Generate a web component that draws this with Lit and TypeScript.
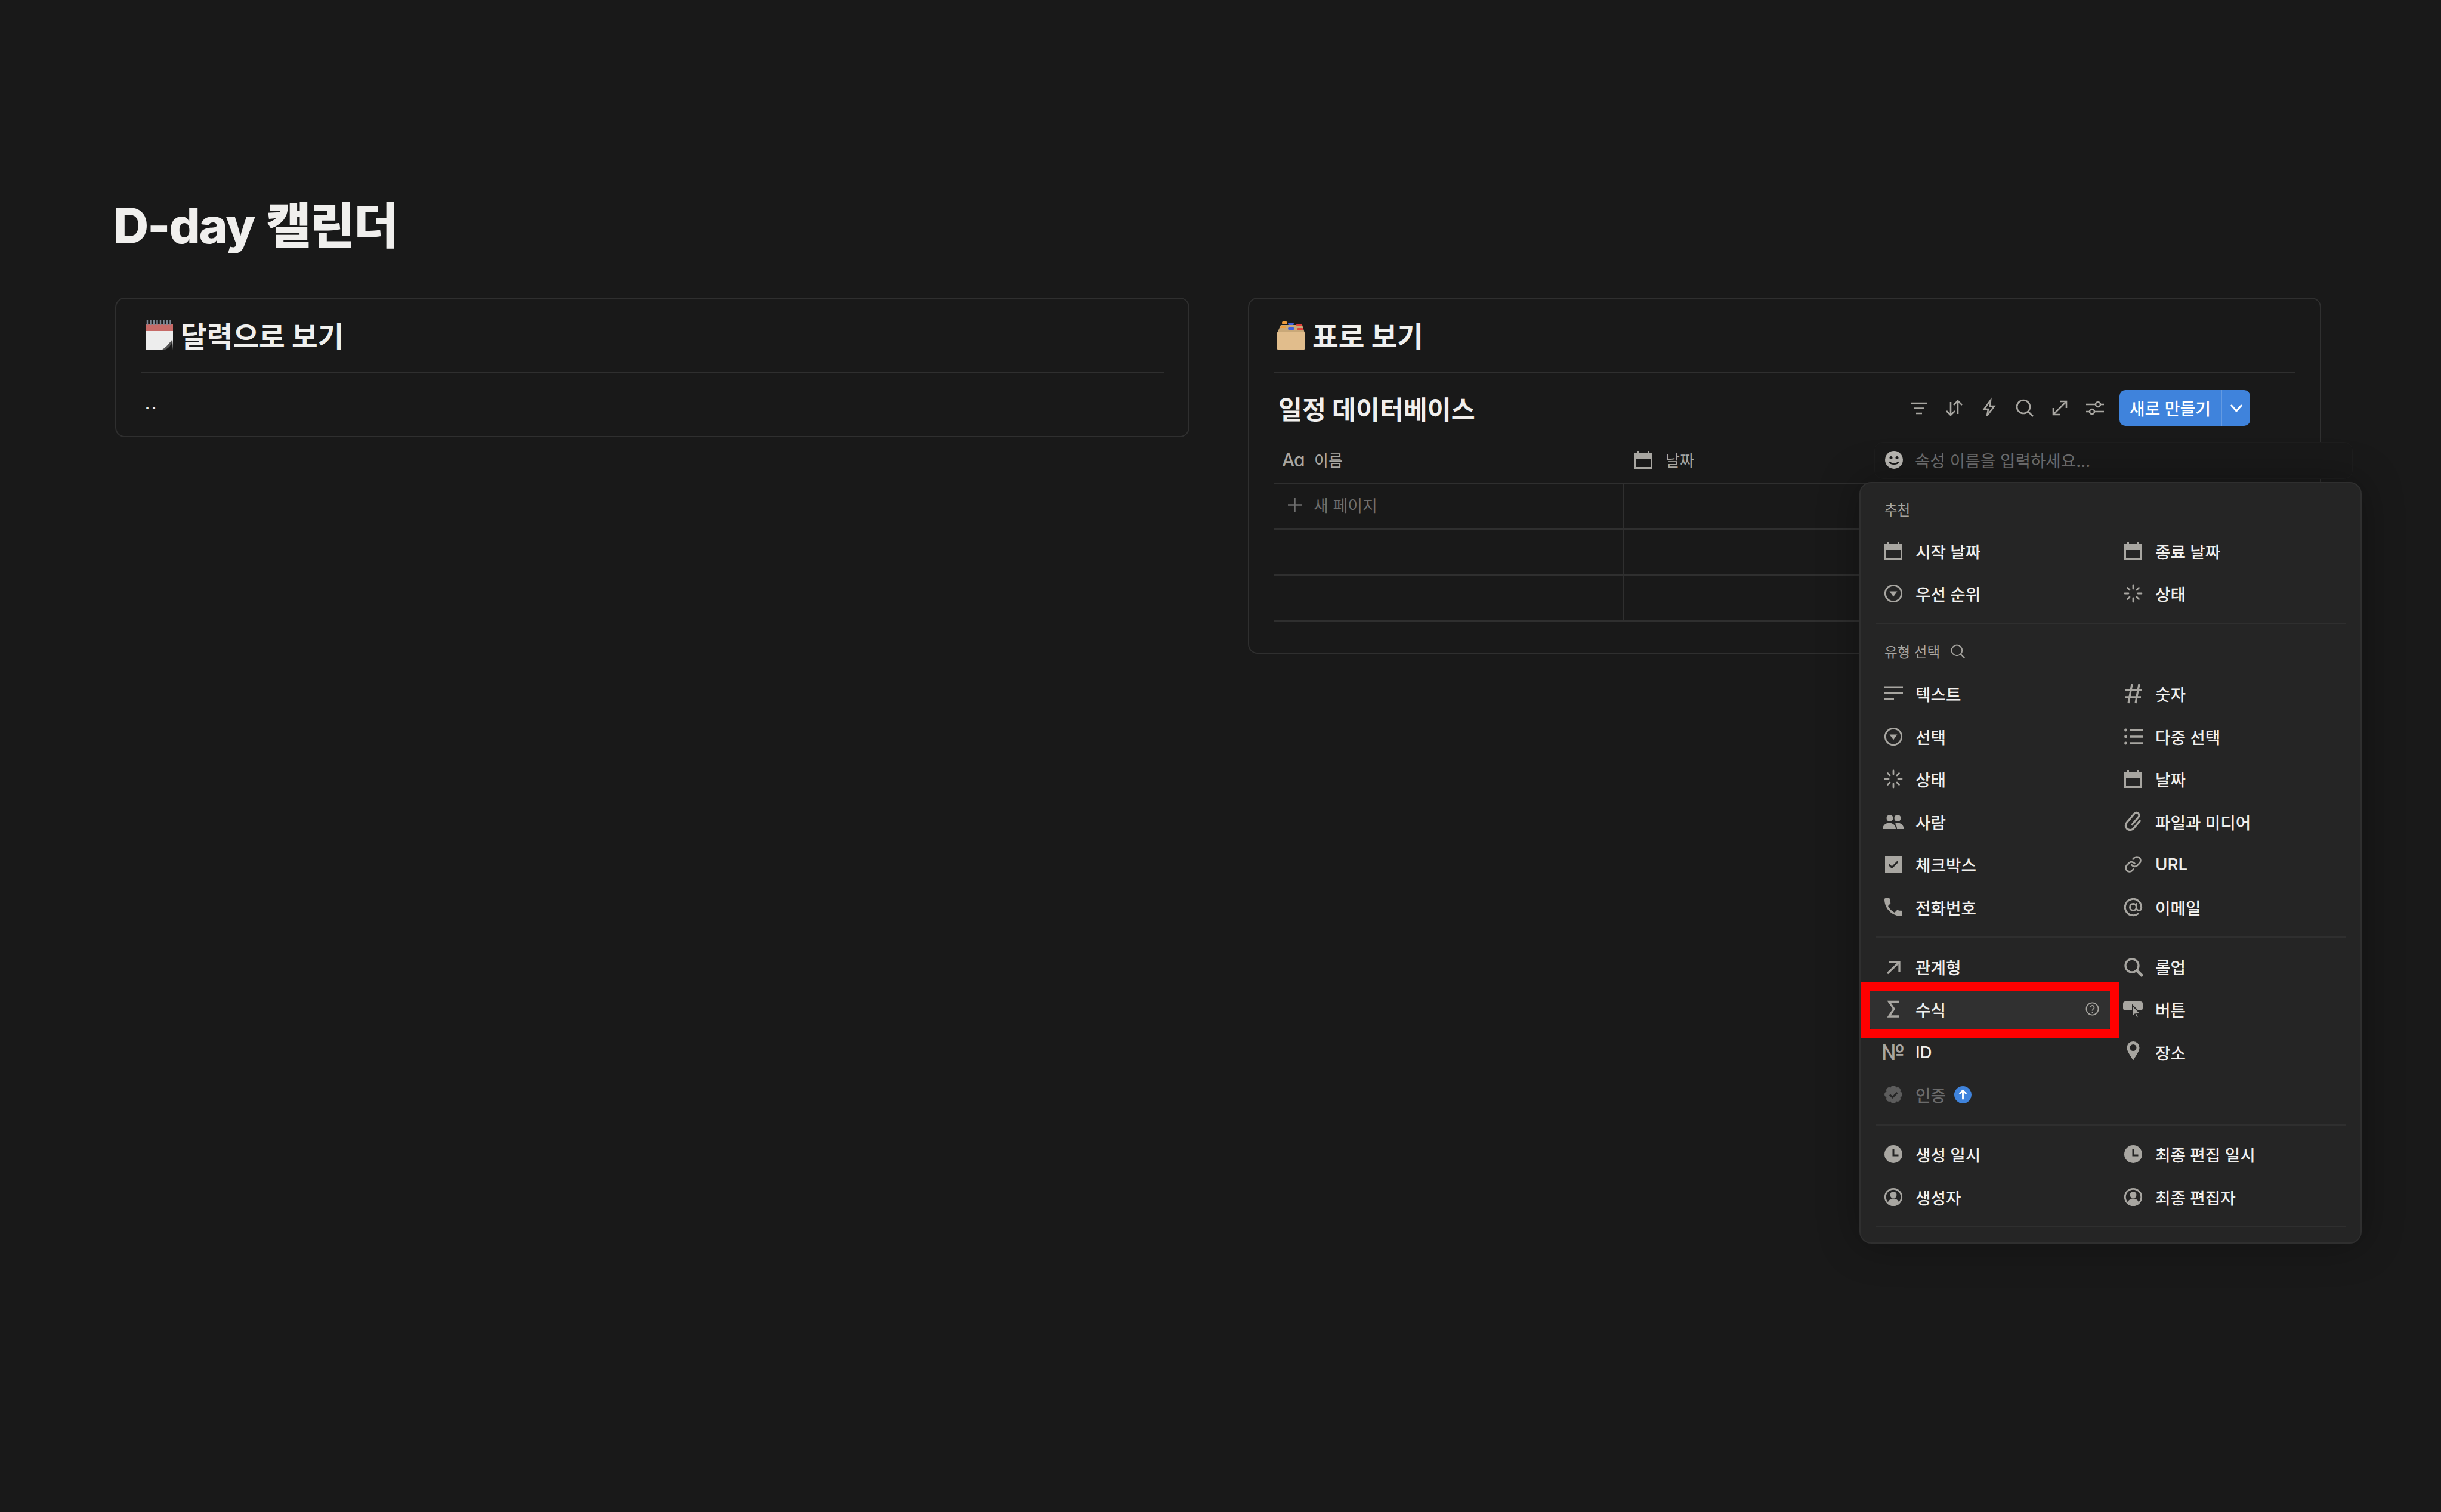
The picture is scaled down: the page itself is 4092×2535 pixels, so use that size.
import { LitElement, html, css } from "lit";
import { customElement } from "lit/decorators.js";

type Item = { icon: string; label: string; help?: boolean; hover?: boolean; dim?: boolean; upgrade?: boolean };

const icons: Record<string, () => unknown> = {
  calendar: () => html`<svg viewBox="0 0 30 30"><path class="f" fill-rule="evenodd" d="M0 3h5V0h3v3h14V0h3v3h5v27H0zM3 13v14h24V13z"/></svg>`,
  select: () => html`<svg viewBox="0 0 30 30"><circle class="s" cx="15" cy="15" r="13.700"/><path class="f" d="M8.500 11.500h13l-6.500 9z"/></svg>`,
  status: () => html`<svg viewBox="0 0 30 30"><path class="s round" d="M15 1v6M15 23v6M1 15h6M23 15h6M5.500 5.500l3.500 3.500M21 21l3.500 3.500M24.500 5.500L21 9M9 21l-3.500 3.500"/></svg>`,
  text: () => html`<svg viewBox="0 0 30 30"><path class="s" d="M0 4h31M0 14h31M0 24h16"/></svg>`,
  hash: () => html`<svg viewBox="0 0 30 30"><path class="s hv" d="M13 -1L7 31M25 -1L19 31M2 9h27M1 21h27"/></svg>`,
  multi: () => html`<svg viewBox="0 0 30 30"><path class="s hv" d="M9 4h22M9 15h22M9 26h22"/><circle class="f" cx="2.500" cy="4" r="2.400"/><circle class="f" cx="2.500" cy="15" r="2.400"/><circle class="f" cx="2.500" cy="26" r="2.400"/></svg>`,
  people: () => html`<svg viewBox="0 0 30 30"><circle class="f" cx="9" cy="8.500" r="5.500"/><circle class="f" cx="22" cy="8.500" r="5.500"/><path class="f" d="M-3 27c0-6 5-10.500 11-10.500s11 4.500 11 10.500z"/><path class="f" d="M21 27c0-3.500-1-6.500-3.500-9 1-.8 2.500-1.500 4.500-1.500 6 0 10.500 4.500 10.500 10.500z"/></svg>`,
  clip: () => html`<svg viewBox="0 0 30 30"><path class="s hv" transform="rotate(40 15 15)" d="M22.500 5v18a7.500 7.500 0 0 1-15 0V3a4.500 4.500 0 0 1 9 0v18"/></svg>`,
  check: () => html`<svg viewBox="0 0 30 30"><rect class="f" x="1" y="1" width="28" height="28"/><path class="cut" d="M7.500 15.500l5 5 10-10"/></svg>`,
  link: () => html`<svg viewBox="0 0 24 24"><g class="s2"><path d="M10 13a5 5 0 0 0 7.540.54l3-3a5 5 0 0 0-7.070-7.070l-1.720 1.710"/><path d="M14 11a5 5 0 0 0-7.540-.54l-3 3a5 5 0 0 0 7.070 7.070l1.710-1.710"/></g></svg>`,
  phone: () => html`<svg viewBox="3 3 18 18"><path class="f" d="M6.620 10.790c1.440 2.830 3.760 5.140 6.590 6.590l2.200-2.200c.27-.27.67-.36 1.020-.24 1.120.37 2.330.57 3.570.57.55 0 1 .45 1 1V20c0 .55-.45 1-1 1-9.390 0-17-7.610-17-17 0-.55.45-1 1-1h3.500c.55 0 1 .45 1 1 0 1.250.2 2.450.57 3.570.11.35.03.74-.25 1.020l-2.200 2.200z"/></svg>`,
  at: () => html`<svg viewBox="1 1 22 22"><g class="s2"><circle cx="12" cy="12" r="4"/><path d="M16 8v5a3 3 0 0 0 6 0v-1a10 10 0 1 0-3.920 7.940"/></g></svg>`,
  arrow: () => html`<svg viewBox="0 0 30 30"><path class="s hv" d="M5 26L24 8M8 7h17v17"/></svg>`,
  rollup: () => html`<svg viewBox="0 0 30 30"><circle class="s hv" cx="13" cy="13" r="11"/><path class="thick" d="M21 21l8 8"/></svg>`,
  sigma: () => html`<svg viewBox="0 0 30 30"><path class="s hv miter" d="M24 2.500H7.500L16 14.500 7.500 27H24"/></svg>`,
  button: () => html`<svg viewBox="0 0 30 30"><rect class="f" x="-2" y="2" width="33" height="15" rx="4"/><path class="cursor" d="M14 9l13 13h-6l3 6.500-3 1.500-3-6.500-4 4z"/></svg>`,
  no: () => html`<span class="glyph">№</span>`,
  pin: () => html`<svg viewBox="0 0 30 30"><path class="f" fill-rule="evenodd" d="M15-3a10.500 10.500 0 0 1 10.500 10.500C25.500 14 19 21 15 29 11 21 4.500 14 4.500 7.500A10.500 10.500 0 0 1 15-3zM15 2a5.500 5.500 0 1 0 0 11 5.500 5.500 0 0 0 0-11z"/></svg>`,
  verified: () => html`<svg viewBox="0 0 30 30"><g class="dimf"><circle cx="15" cy="15" r="12"/><circle cx="15" cy="5" r="5"/><circle cx="15" cy="25" r="5"/><circle cx="5" cy="15" r="5"/><circle cx="25" cy="15" r="5"/><circle cx="8" cy="8" r="5"/><circle cx="22" cy="8" r="5"/><circle cx="8" cy="22" r="5"/><circle cx="22" cy="22" r="5"/></g><path class="cut" d="M9 15.500l4.500 4.500 8-8"/></svg>`,
  clock: () => html`<svg viewBox="0 0 30 30"><circle class="f" cx="15" cy="15" r="15"/><path class="cut miter" d="M15 6.500V17h8.500"/></svg>`,
  person: () => html`<svg viewBox="0 0 30 30"><circle class="s" cx="15" cy="15" r="13.700"/><circle class="f" cx="15" cy="11.500" r="5.500"/><path class="f" d="M5.500 25c1-5 5-7.500 9.500-7.500s8.500 2.500 9.500 7.500A14 14 0 0 1 5.500 25z"/></svg>`,
};

const suggested: Item[] = [
  { icon: "calendar", label: "시작 날짜" },
  { icon: "calendar", label: "종료 날짜" },
  { icon: "select", label: "우선 순위" },
  { icon: "status", label: "상태" },
];
const basic: Item[] = [
  { icon: "text", label: "텍스트" },
  { icon: "hash", label: "숫자" },
  { icon: "select", label: "선택" },
  { icon: "multi", label: "다중 선택" },
  { icon: "status", label: "상태" },
  { icon: "calendar", label: "날짜" },
  { icon: "people", label: "사람" },
  { icon: "clip", label: "파일과 미디어" },
  { icon: "check", label: "체크박스" },
  { icon: "link", label: "URL" },
  { icon: "phone", label: "전화번호" },
  { icon: "at", label: "이메일" },
];
const advanced: Item[] = [
  { icon: "arrow", label: "관계형" },
  { icon: "rollup", label: "롤업" },
  { icon: "sigma", label: "수식", hover: true, help: true },
  { icon: "button", label: "버튼" },
  { icon: "no", label: "ID" },
  { icon: "pin", label: "장소" },
  { icon: "verified", label: "인증", dim: true, upgrade: true },
];
const meta: Item[] = [
  { icon: "clock", label: "생성 일시" },
  { icon: "clock", label: "최종 편집 일시" },
  { icon: "person", label: "생성자" },
  { icon: "person", label: "최종 편집자" },
];

@customElement("app-root")
export class AppRoot extends LitElement {
  static styles = css`
    :host {
      display: block;
      position: relative;
      width: 4092px;
      height: 2535px;
      overflow: hidden;
      background: #191919;
      color: #f0efed;
      font-family: Inter, "Noto Sans CJK KR", sans-serif;
    }
    svg { display: block; overflow: visible; }
    .f { fill: #a8a6a1; }
    .s { fill: none; stroke: #a8a6a1; stroke-width: 2.800; }
    .s.hv { stroke-width: 3.300; }
    .s2 { fill: none; stroke: #a8a6a1; stroke-width: 2.200; stroke-linecap: round; stroke-linejoin: round; }
    .round { stroke-linecap: round; }
    .thick { fill: none; stroke: #a8a6a1; stroke-width: 5; stroke-linecap: round; }
    .s.miter { stroke-linejoin: miter; }
    .cut { fill: none; stroke: #252525; stroke-width: 3; }
    .dimf { fill: #5c5c5c; }
    .cursor { fill: #a8a6a1; stroke: #252525; stroke-width: 2; }
    .glyph { display: block; font-size: 36px; line-height: 30px; margin-left: -5px; color: #a8a6a1; white-space: nowrap; }

    .page { padding: 329px 0 0 193px; }
    h1 {
      margin: 0 0 70px -3px;
      font-size: 82px;
      line-height: 100px;
      font-weight: 800;
      letter-spacing: -2.200px;
      word-spacing: 4px;
    }
    .cols { display: flex; align-items: flex-start; gap: 98px; }
    .card {
      box-sizing: border-box;
      border: 2px solid #2f2f2f;
      border-radius: 16px;
      padding: 0 41px;
    }
    .card.left { width: 1801px; height: 234px; }
    .card.right { width: 1799px; height: 597px; }
    .head {
      display: flex;
      align-items: center;
      gap: 13px;
      height: 125px;
      padding: 0 0 2px 8px;
      box-sizing: border-box;
      border-bottom: 2px solid #2f2f2f;
      font-size: 47.500px;
      font-weight: 700;
    }
    .card.right .head { padding-left: 6px; }
    .emoji { width: 46px; height: 50px; flex: none; }
    .dots { padding: 30px 0 0 7px; font-size: 28px; line-height: 40px; letter-spacing: 3px; }

    .dbbar { display: flex; align-items: center; justify-content: space-between; height: 112px; box-sizing: border-box; padding: 3px 76px 0 8px; }
    .dbtitle { font-size: 43.400px; font-weight: 700; }
    .tools { display: flex; align-items: center; }
    .tool { width: 30px; height: 30px; margin-right: 29px; }
    .tool .t { fill: none; stroke: #a8a6a1; stroke-width: 2.600; }
    .new {
      display: flex;
      align-items: stretch;
      margin-left: -3px;
      width: 219px;
      height: 60px;
      border-radius: 10px;
      background: #3f83dc;
      color: #fff;
      font-size: 28px;
      font-weight: 500;
    }
    .new .main { width: 170px; display: flex; align-items: center; justify-content: center; border-right: 2px solid #ffffff30; }
    .new .caret { flex: 1; display: flex; align-items: center; justify-content: center; }
    .caret svg { width: 22px; height: 14px; }
    .caret path { fill: none; stroke: #fff; stroke-width: 3; }

    .row { display: grid; grid-template-columns: 588px 1fr; height: 77px; box-sizing: border-box; border-bottom: 2px solid #2f2f2f; }
    .row.hd { height: 73px; }
    .row .c { display: flex; align-items: center; font-size: 26px; box-sizing: border-box; }
    .row.hd .c { color: #a8a6a1; padding-bottom: 6px; }
    .row:not(.hd) .c:first-child { border-right: 2px solid #2f2f2f; }
    .row.hd .c:first-child { padding-left: 14px; gap: 18px; }
    .row.hd .c:last-child { padding-left: 17px; gap: 22px; }
    .aa { width: 36px; font-size: 30px; font-weight: 500; font-feature-settings: "cv11"; letter-spacing: -1px; }
    .hicon { width: 30px; height: 30px; }
    .row .add { padding: 0 0 5px 24px; gap: 20px; color: #6e6e6e; font-size: 27px; }
    .add svg { width: 23px; height: 23px; }
    .add path { fill: none; stroke: #6e6e6e; stroke-width: 2.500; }

    .namer {
      position: absolute;
      left: 3143px;
      top: 742px;
      width: 800px;
      height: 60px;
      box-sizing: border-box;
      background: #191919;
      border-radius: 14px;
      display: flex;
      align-items: center;
      padding: 0 0 3px 17px;
      gap: 20px;
      font-size: 27.700px;
      color: #6e6e6e;
      box-shadow: 0 0 0 1px #1e1e1e;
    }
    .namer svg { width: 30px; height: 30px; flex: none; }

    .menu {
      position: absolute;
      left: 3117px;
      top: 808px;
      width: 842px;
      height: 1277px;
      box-sizing: border-box;
      background: #252525;
      border: 2px solid #2f2f2f;
      border-radius: 20px;
      padding: 0 16px;
      box-shadow: 0 0 70px rgba(0, 0, 0, 0.32);
    }
    .sec { border-bottom: 2px solid #2f2f2f; margin: 0 8px 0 10px; padding: 0 0 13px; }
    .sec .grid { margin: 0 -8px 0 -10px; }
    .sec + .sec { padding-top: 12px; }
    .sec.nohead { padding-top: 13px; padding-bottom: 13.500px; }
    .label {
      display: flex;
      align-items: center;
      gap: 18px;
      font-size: 23.500px;
      color: #a8a6a1;
      height: 34px;
      margin: 27px 0 17px 14px;
    }
    .sec + .sec .label { margin-top: 17px; margin-bottom: 18px; }
    .label svg { width: 24px; height: 24px; }
    .label .t { fill: none; stroke: #a8a6a1; stroke-width: 2.500; }
    .grid { display: grid; grid-template-columns: 402px 402px; grid-auto-rows: 71.600px; }
    .item {
      display: flex;
      align-items: center;
      padding-left: 24px;
      gap: 22px;
      font-size: 27.700px;
      font-weight: 500;
      border-radius: 6px;
      position: relative;
    }
    .item.hover { background: #303030; }
    .item.dim { color: #6b6b6b; }
    .ic { width: 30px; height: 30px; flex: none; }
    .ic svg { width: 30px; height: 30px; }
    .help { position: absolute; right: 18px; top: 24px; width: 23px; height: 23px; }
    .help circle, .help path { fill: none; stroke: #a8a6a1; stroke-width: 1.800; }
    .up { width: 29px; height: 29px; margin-left: -8px; }
    .up path { fill: none; stroke: #fff; stroke-width: 3; }
    .up circle { fill: #3f83dc; }

    .mark {
      position: absolute;
      left: 3120px;
      top: 1647px;
      width: 432px;
      height: 93px;
      box-sizing: border-box;
      border: 15px solid #ff0000;
    }
  `;

  private item(i: Item) {
    return html`<div class="item ${i.hover ? "hover" : ""} ${i.dim ? "dim" : ""}">
      <span class="ic">${icons[i.icon]()}</span>
      <span>${i.label}</span>
      ${i.upgrade
        ? html`<svg class="up" viewBox="0 0 30 30"><circle cx="15" cy="15" r="15"/><path d="M15 23V8M9 13.500L15 7.500l6 6"/></svg>`
        : ""}
      ${i.help
        ? html`<svg class="help" viewBox="0 0 24 24"><circle cx="12" cy="12" r="10.500"/><path d="M8.800 9.500a3.200 3.200 0 1 1 5 2.600c-1.200.9-1.800 1.500-1.800 3M12 17.200v1.800"/></svg>`
        : ""}
    </div>`;
  }

  private calendarEmoji() {
    return html`<svg class="emoji" viewBox="0 0 46 50">
      <rect x="0" y="6" width="46" height="12" fill="#c76b68" />
      <rect x="0" y="18" width="46" height="32" fill="#ededed" />
      <g stroke="#7d8794" stroke-width="2.500">
        <path d="M3 0v8M8.500 0v8M14 0v8M19.500 0v8M25 0v8M30.500 0v8M36 0v8M41.500 0v8" />
      </g>
      <path d="M26 50C34 48 42 44 45 32L46 50z" fill="#191919" />
      <path d="M26 50C33 47 38 40 45 32C44 42 38 48 30 50z" fill="#555" />
    </svg>`;
  }

  private boxEmoji() {
    return html`<svg class="emoji" viewBox="0 0 46 50">
      <path d="M6 8h36l4 13H0z" fill="#c9a878" />
      <rect x="8" y="2" width="9" height="5" rx="2" fill="#ee9c3c" />
      <rect x="18" y="4" width="10" height="4" rx="2" fill="#3d5fe0" />
      <rect x="32" y="6" width="10" height="4" rx="2" fill="#e0403a" />
      <rect x="5" y="10" width="10" height="3" rx="1.500" fill="#ee9c3c" />
      <rect x="18" y="12" width="11" height="4" rx="2" fill="#3d5fe0" />
      <rect x="33" y="13" width="11" height="4" rx="2" fill="#e0403a" />
      <rect x="0" y="20" width="46" height="29" rx="1" fill="#e1bd8c" />
    </svg>`;
  }

  render() {
    return html`
      <div class="page">
        <h1>D-day 캘린더</h1>
        <div class="cols">
          <section class="card left">
            <div class="head">${this.calendarEmoji()}<span>달력으로 보기</span></div>
            <div class="dots">..</div>
          </section>
          <section class="card right">
            <div class="head">${this.boxEmoji()}<span>표로 보기</span></div>
            <div class="dbbar">
              <div class="dbtitle">일정 데이터베이스</div>
              <div class="tools">
                <svg class="tool" viewBox="0 0 30 30"><path class="t" d="M1 7h28M6 15.500h18M10 24h10"/></svg>
                <svg class="tool" viewBox="0 0 30 30"><path class="t" d="M9 5v22M2 20l7 7 7-7M21 25V3M14 10l7-7 7 7"/></svg>
                <svg class="tool" viewBox="0 0 30 30"><path class="t" d="M17 2L6 17h7l-2 11 12-16h-7z"/></svg>
                <svg class="tool" viewBox="0 0 30 30"><circle class="t" cx="13" cy="13" r="11"/><path class="t" d="M21 21l8 8"/></svg>
                <svg class="tool" viewBox="0 0 30 30"><path class="t" d="M5 25L25 5M15 4h11v11M4 15v11h11"/></svg>
                <svg class="tool" viewBox="0 0 30 30"><path class="t" d="M0 9h16M24 9h6M0 21h6M14 21h16"/><circle class="t" cx="20" cy="9" r="4"/><circle class="t" cx="10" cy="21" r="4"/></svg>
                <div class="new">
                  <div class="main">새로 만들기</div>
                  <div class="caret"><svg viewBox="0 0 22 14"><path d="M2 2l9 10 9-10"/></svg></div>
                </div>
              </div>
            </div>
            <div class="row hd">
              <div class="c"><span class="aa">Aa</span><span>이름</span></div>
              <div class="c"><span class="hicon">${icons.calendar()}</span><span>날짜</span></div>
            </div>
            <div class="row">
              <div class="c add"><svg viewBox="0 0 23 23"><path d="M11.500 0v23M0 11.500h23"/></svg><span>새 페이지</span></div>
              <div class="c"></div>
            </div>
            <div class="row"><div class="c"></div><div class="c"></div></div>
            <div class="row"><div class="c"></div><div class="c"></div></div>
          </section>
        </div>
      </div>

      <div class="namer">
        <svg viewBox="0 0 30 30">
          <circle cx="15" cy="15" r="15" fill="#b9b7b2" />
          <circle cx="10" cy="11.500" r="2.500" fill="#191919" />
          <circle cx="20" cy="11.500" r="2.500" fill="#191919" />
          <path d="M7.500 18c2 5 13 5 15 0" fill="none" stroke="#191919" stroke-width="2.500" />
        </svg>
        <span>속성 이름을 입력하세요...</span>
      </div>

      <div class="menu">
        <div class="sec">
          <div class="label">추천</div>
          <div class="grid">${suggested.map((i) => this.item(i))}</div>
        </div>
        <div class="sec">
          <div class="label">
            <span>유형 선택</span>
            <svg viewBox="0 0 30 30"><circle class="t" cx="13" cy="13" r="11"/><path class="t" d="M21 21l8 8"/></svg>
          </div>
          <div class="grid">${basic.map((i) => this.item(i))}</div>
        </div>
        <div class="sec nohead">
          <div class="grid">${advanced.map((i) => this.item(i))}</div>
        </div>
        <div class="sec nohead">
          <div class="grid">${meta.map((i) => this.item(i))}</div>
        </div>
      </div>
      <div class="mark"></div>
    `;
  }
}
